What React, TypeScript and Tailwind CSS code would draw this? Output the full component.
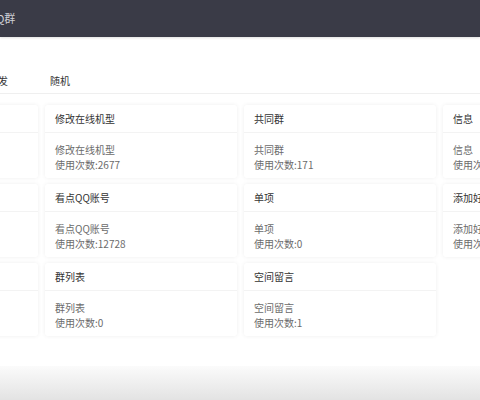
import React from 'react'

type Item = { title: string; desc: string; count: number | null }

const rows: Item[][] = [
  [
    { title: '好友列表', desc: '好友列表', count: 3021 },
    { title: '修改在线机型', desc: '修改在线机型', count: 2677 },
    { title: '共同群', desc: '共同群', count: 171 },
    { title: '信息', desc: '信息', count: 96 },
  ],
  [
    { title: '名片赞', desc: '名片赞', count: 845 },
    { title: '看点QQ账号', desc: '看点QQ账号', count: 12728 },
    { title: '单项', desc: '单项', count: 0 },
    { title: '添加好友', desc: '添加好友', count: 52 },
  ],
  [
    { title: '退出群聊', desc: '退出群聊', count: 3 },
    { title: '群列表', desc: '群列表', count: 0 },
    { title: '空间留言', desc: '空间留言', count: 1 },
    { title: '', desc: '', count: null },
  ],
]

function Card({ item }: { item: Item }) {
  if (item.count === null) return <div />
  return (
    <div className="bg-white rounded-[3px] shadow-[0_0_4px_rgba(0,0,0,0.07)] h-[73px]">
      <div className="h-[28px] px-[10px] flex items-center border-b border-[#f3f3f3] text-[#333]">
        {item.title}
      </div>
      <div className="px-[10px] pt-[9px] leading-[15px] text-[#6b6b6b]">
        <p>{item.desc}</p>
        <p>使用次数:{item.count}</p>
      </div>
    </div>
  )
}

export default function App() {
  return (
    <div className="w-[480px] h-[400px] overflow-hidden bg-white flex flex-col text-[10px] font-['Noto_Sans_CJK_SC','Noto_Sans',sans-serif]">
      {/* 顶栏 */}
      <header className="h-[37px] shrink-0 bg-[#3a3b47] flex items-center shadow-[0_1px_2px_rgba(0,0,0,0.12)]">
        <span className="-ml-[12px] text-[11px] text-[#cfd0d6]">QQ群</span>
      </header>

      {/* 标签 */}
      <div className="mt-[30px] h-[27px] border-b border-[#efefef] flex items-center">
        <div className="-ml-[12px] flex gap-[42px] text-[#333]">
          <span>群发</span>
          <span>随机</span>
        </div>
      </div>

      {/* 功能卡片 */}
      <div className="mt-[11px] -ml-[154px] w-[789px] grid grid-cols-4 gap-x-[7px] gap-y-[6px]">
        {rows.flat().map((it, i) => (
          <Card key={i} item={it} />
        ))}
      </div>

      <div className="flex-1" />
      <footer className="h-[34px] shrink-0 bg-linear-to-b from-[#fbfbfb] to-[#e3e3e3]" />
    </div>
  )
}
